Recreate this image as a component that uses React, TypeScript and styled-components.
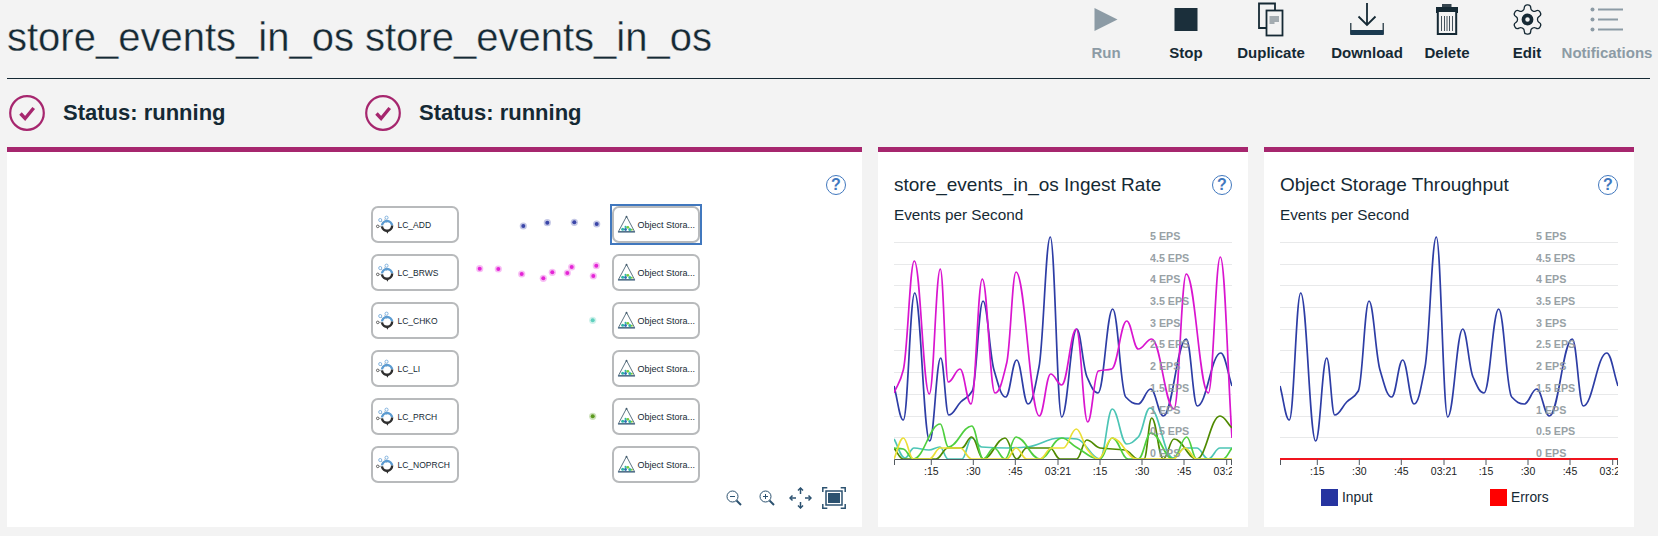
import React from 'react'
import styled, { createGlobalStyle } from 'styled-components'

type Pt = [number, number]

const Ink = '#152934'
const Magenta = '#a6266e'
const Link = '#4178be'

const GlobalStyle = createGlobalStyle`
  html, body {
    margin: 0;
    background: #f3f3f3;
    color: ${Ink};
    font-family: "Liberation Sans", Arial, sans-serif;
  }
  * { box-sizing: border-box; }
`

const Page = styled.div`
  width: 1658px;
  height: 536px;
  overflow: hidden;
  padding: 0 8px 0 7px;
`

const Header = styled.header`
  display: flex;
  justify-content: space-between;
  height: 79px;
  border-bottom: 1px solid ${Ink};
`

const Title = styled.h1`
  margin: 14px 0 0;
  font-size: 40px;
  line-height: 46px;
  font-weight: 400;
  -webkit-text-stroke: 0.35px #f3f3f3;
`

const Toolbar = styled.nav`
  display: flex;
  padding-top: 2px;
  padding-right: 3px;
`

const Tool = styled.div<{ $shift?: number; $off?: boolean }>`
  width: 80px;
  margin-left: ${p => p.$shift || 0}px;
  display: flex;
  flex-direction: column;
  align-items: center;
  color: ${p => (p.$off ? '#8c9ba5' : Ink)};
  font-size: 15px;
  font-weight: 700;
  white-space: nowrap;
  svg {
    display: block;
    height: 36px;
  }
  span {
    margin-top: 7px;
    line-height: 16px;
  }
`

const StatusRow = styled.div`
  display: flex;
  align-items: center;
  height: 68px;
  padding-left: 2px;
`

const Status = styled.div`
  width: 356px;
  display: flex;
  align-items: center;
  gap: 18px;
  font-size: 22px;
  font-weight: 700;
`

const Panels = styled.div`
  display: grid;
  grid-template-columns: 855px 370px 370px;
  gap: 16px;
  height: 380px;
`

const Panel = styled.section`
  background: #fff;
  border-top: 5px solid ${Magenta};
  padding: 23px 16px 0;
`

const PanelHead = styled.div<{ $end?: boolean }>`
  display: flex;
  justify-content: ${p => (p.$end ? 'flex-end' : 'space-between')};
  align-items: center;
  height: 20px;
`

const PanelTitle = styled.h2`
  margin: 0;
  font-size: 19px;
  font-weight: 400;
`

const SubTitle = styled.div`
  margin-top: 10px;
  font-size: 15.3px;
  line-height: 20px;
`

const Help = styled.span`
  width: 20px;
  height: 20px;
  border: 1.5px solid ${Link};
  border-radius: 50%;
  color: ${Link};
  font-size: 16px;
  font-weight: 700;
  line-height: 17px;
  text-align: center;
`

const Diagram = styled.div`
  position: relative;
  display: flex;
  gap: 153px;
  margin: 11px 0 0 348px;
  width: 329px;
`

const NodeColumn = styled.div`
  display: flex;
  flex-direction: column;
  gap: 11px;
`

const Node = styled.div<{ $selected?: boolean; $size: number }>`
  position: relative;
  width: 88px;
  height: 37px;
  display: flex;
  align-items: center;
  gap: 1px;
  padding-left: 1.5px;
  border: 2px solid #b8babc;
  border-radius: 7px;
  background: #fff;
  font-size: ${p => p.$size}px;
  white-space: nowrap;
  &::after {
    content: '';
    display: ${p => (p.$selected ? 'block' : 'none')};
    position: absolute;
    inset: -4px;
    border: 2px solid ${Link};
  }
`

const Dots = styled.svg`
  position: absolute;
  left: 0;
  top: 0;
  pointer-events: none;
`

const Controls = styled.div`
  display: flex;
  justify-content: flex-end;
  align-items: center;
  height: 22px;
  margin-top: 4px;
  color: #2c5270;
`

const Control = styled.svg<{ $gap?: number }>`
  display: block;
  margin-left: ${p => p.$gap || 0}px;
`

const ChartBox = styled.svg`
  display: block;
  margin-top: 5px;
  overflow: hidden;
`

const Legend = styled.div`
  display: flex;
  margin: 9px 0 0 41px;
  font-size: 13.8px;
`

const LegendItem = styled.div`
  flex: 0 0 169px;
  display: flex;
  align-items: center;
  gap: 4px;
`

const Swatch = styled.i<{ $color: string }>`
  width: 17px;
  height: 17px;
  background: ${p => p.$color};
  border: 1px solid ${p => p.$color}bb;
`

// monotone cubic through the traced points, long handles keep the peaks round
const smooth = (pts: Pt[]): string => {
  const n = pts.length
  const s: number[] = []
  for (let i = 0; i < n - 1; i++) s.push((pts[i + 1][1] - pts[i][1]) / (pts[i + 1][0] - pts[i][0]))
  const m = pts.map((_, i) => {
    if (i === 0) return s[0]
    if (i === n - 1) return s[n - 2]
    if (s[i - 1] * s[i] <= 0) return 0
    return (2 * s[i - 1] * s[i]) / (s[i - 1] + s[i])
  })
  let d = `M${pts[0][0]},${pts[0][1]}`
  for (let i = 0; i < n - 1; i++) {
    const h = (pts[i + 1][0] - pts[i][0]) * 0.4
    d += `C${pts[i][0] + h},${pts[i][1] + m[i] * h} ${pts[i + 1][0] - h},${pts[i + 1][1] - m[i + 1] * h} ${pts[i + 1][0]},${pts[i + 1][1]}`
  }
  return d
}

const blue: Pt[] = [
  [0, 386], [9.3, 420], [20.7, 293], [35.7, 441], [46.7, 358], [54.7, 415], [66.7, 402], [78.3, 391], [89, 301],
  [100, 370], [111.7, 397], [122.7, 360], [134, 404], [145, 367], [156.3, 237], [167.7, 417], [182.7, 329],
  [193, 377], [204, 393], [218.7, 309], [231.7, 397], [244.3, 404], [256.7, 389], [269.3, 416], [292.3, 339],
  [303.3, 406], [326.7, 353], [338, 386]
]

const pink: Pt[] = [
  [0, 393], [9.3, 370], [20.3, 261], [35.3, 394], [46.3, 269], [54.3, 382], [66, 369], [77, 404], [88.3, 279],
  [101, 393], [112.7, 363], [122, 272], [145.3, 416], [156.7, 374], [167.7, 385], [182.3, 329], [193.7, 422],
  [204.3, 371], [217.7, 369], [232.7, 321], [244.3, 349], [257.7, 339], [280, 409], [292.3, 274], [314.3, 393],
  [326.3, 257], [338, 438]
]

const teal: Pt[] = [
  [0, 439], [11, 458], [20, 448], [35, 450], [46, 447], [54, 459], [68, 459], [77.7, 438], [87.7, 447], [112.7, 448],
  [132.7, 447], [166, 438], [182.7, 439], [206, 459], [218.3, 409], [232.7, 444], [244.3, 437], [256, 408],
  [279, 458], [291, 448], [302.7, 448], [314.3, 459], [326, 448], [338, 448]
]

const olive: Pt[] = [
  [0, 448], [9.3, 459], [42, 459], [54, 448], [67.7, 448], [77.7, 437], [89.3, 459], [111, 438], [122.7, 459],
  [132.7, 448], [156, 448], [166, 459], [182.7, 459], [192.7, 440], [206, 448], [231, 450], [244.3, 459], [250, 459],
  [257.7, 418], [269.3, 459], [280, 439], [302.7, 459], [326, 416], [338, 428]
]

const green: Pt[] = [
  [0, 448], [9.3, 449], [19.3, 459], [46.3, 424], [54.3, 447], [77.7, 426], [89.3, 459], [100, 448], [111, 459],
  [122, 437], [146, 459], [167.7, 438], [182, 447], [206, 459], [218.3, 438], [234.3, 459], [244.3, 459],
  [257, 433], [279, 459], [292.7, 437], [302.7, 459], [329, 459], [338, 448]
]

const yellow: Pt[] = [
  [0, 459], [9.3, 438], [19.3, 459], [35.3, 459], [46.3, 448], [66, 448], [77.7, 459], [112.7, 459], [122, 448],
  [132.7, 459], [146, 459], [157.7, 448], [169.3, 448], [182.3, 429], [193.7, 450], [204.3, 459], [218.3, 438],
  [242.7, 459], [279, 459], [291, 448], [302.7, 459], [338, 459]
]

const ingestLines = [
  { pts: blue, color: '#2d3da5' },
  { pts: pink, color: '#d915cf' },
  { pts: teal, color: '#4cc5b5' },
  { pts: olive, color: '#4f8a00' },
  { pts: green, color: '#4fcf3f' },
  { pts: yellow, color: '#ebdf35' }
]

const scale = ['5', '4.5', '4', '3.5', '3', '2.5', '2', '1.5', '1', '0.5', '0']
const gridY = [242, 264, 285, 307, 329, 350, 372, 394, 416, 437, 459]
const ticks = [
  { x: 37.3, label: ':15' },
  { x: 79.3, label: ':30' },
  { x: 121.3, label: ':45' },
  { x: 164, label: '03:21' },
  { x: 206, label: ':15' },
  { x: 248, label: ':30' },
  { x: 290, label: ':45' },
  { x: 332.7, label: '03:21' }
]

const Chart = ({ lines, errors }: { lines: { pts: Pt[]; color: string }[]; errors?: boolean }) => (
  <ChartBox width={338} height={250} viewBox="0 230 338 250">
    {gridY.slice(0, 10).map(y => (
      <line key={y} x1={0} x2={338} y1={y + 0.5} y2={y + 0.5} stroke="#e8e9ea" />
    ))}
    {lines.map(l => (
      <path key={l.color} d={smooth(l.pts)} fill="none" stroke={l.color} strokeWidth={1.7} />
    ))}
    <path d="M0.5,465V459.5H337.5V465" fill="none" stroke="#50585e" />
    {errors && <line x1={0} x2={338} y1={459} y2={459} stroke="#f0141e" strokeWidth={2} />}
    {ticks.map(t => (
      <g key={t.x}>
        <line x1={t.x} x2={t.x} y1={459} y2={465} stroke="#50585e" />
        <text x={t.x} y={475} textAnchor="middle" fontSize={10.5} fill="#1c1c1c">
          {t.label}
        </text>
      </g>
    ))}
    {scale.map((v, i) => (
      <text key={v} x={256} y={gridY[i] - 2} fontSize={10.7} fontWeight={700} fill="#8d979c" opacity={0.9}>
        {v} EPS
      </text>
    ))}
  </ChartBox>
)

const CheckCircle = () => (
  <svg width={36} height={36} viewBox="0 0 36 36">
    <circle cx={18} cy={18} r={16.8} fill="none" stroke={Magenta} strokeWidth={2.2} />
    <path d="M11.5 18.5l4.6 5 8.6-10.5" fill="none" stroke={Magenta} strokeWidth={3.4} />
  </svg>
)

const LcIcon = () => (
  <svg width={22} height={22} viewBox="0 0 24 24">
    <path d="M4 13.5h4.5M6 7l4 4M10.5 5.5l2 4" stroke="#8a949a" strokeWidth={0.7} fill="none" />
    <circle cx={5.7} cy={6.6} r={1.7} fill="#fff" stroke="#6ea6d8" strokeWidth={0.9} />
    <circle cx={12.6} cy={4} r={1.7} fill="#fff" stroke="#6ea6d8" strokeWidth={0.9} />
    <circle cx={3} cy={13.5} r={1.4} fill="#fff" stroke="#333" strokeWidth={0.8} />
    <path d="M7.6 12.5a5.6 5.6 0 0 1 11.1 0" fill="none" stroke="#5b9bd1" strokeWidth={2.6} />
    <path d="M18.7 12.5a5.6 5.6 0 0 1-11.1 1.2" fill="none" stroke="#2f2f2f" strokeWidth={2.6} />
    <path d="M12 18.5l1.6 3 1.4-3z" fill="#2f2f2f" />
  </svg>
)

const StoreIcon = () => (
  <svg width={21} height={19} viewBox="0 0 22 20">
    <path d="M11 1.5L2.5 17.5h17z" fill="none" stroke="#40596b" strokeWidth={0.9} />
    <rect x={2} y={17} width={18} height={1.5} fill="#50708a" />
    <circle cx={11} cy={1.8} r={1} fill="#40596b" />
    <circle cx={7} cy={15} r={1.6} fill="#2db5a5" />
    <circle cx={10} cy={15.3} r={1.5} fill="#2f6fb5" />
    <circle cx={12.4} cy={13} r={1.5} fill="#7ccc3a" />
    <circle cx={14.5} cy={15.2} r={1.6} fill="#2db5a5" />
    <circle cx={10} cy={12.5} r={1.1} fill="#2db5a5" />
    <circle cx={16.6} cy={15.5} r={1} fill="#7ccc3a" />
  </svg>
)

const sources = ['LC_ADD', 'LC_BRWS', 'LC_CHKO', 'LC_LI', 'LC_PRCH', 'LC_NOPRCH']

// flowing events between the nodes
const dots = [
  ...[[523.3, 226], [547.3, 222.7], [574.3, 222.3], [596.7, 224]].map(p => ({ p, c: '#3b46a8' })),
  ...[
    [479.7, 268.7], [498.3, 269], [521.7, 274], [543.3, 278.3], [552.3, 272.3], [567.3, 273], [571.7, 267],
    [593.3, 276], [596.3, 265.7]
  ].map(p => ({ p, c: '#e426d6' })),
  { p: [592.7, 320.3], c: '#5fd0be' },
  { p: [592.7, 416.3], c: '#5c9a20' }
]

const ToolIcon = {
  run: (
    <svg width={30} viewBox="0 0 30 36">
      <path d="M3.5 6l23 11.5-23 11.5z" fill="#8c9ba5" />
    </svg>
  ),
  stop: (
    <svg width={30} viewBox="0 0 30 36">
      <rect x={3.5} y={6} width={23} height={23} fill="#1b2f3b" />
    </svg>
  ),
  duplicate: (
    <svg width={30} viewBox="0 0 30 36">
      <path d="M10 26H3V1.5h16V8" fill="none" stroke={Ink} strokeWidth={1.8} />
      <rect x={10.5} y={8.5} width={16} height={25} fill="#f3f3f3" stroke={Ink} strokeWidth={1.8} />
      <path d="M13.5 15h9.5M13.5 17h9.5M13.5 19h9.5M13.5 21h5" stroke="#55646e" strokeWidth={1} />
    </svg>
  ),
  download: (
    <svg width={34} viewBox="0 0 34 36">
      <path d="M17 1v22M8.5 14.5l8.5 8.5 8.5-8.5" fill="none" stroke={Ink} strokeWidth={1.8} />
      <path d="M.8 21v11h32.4V21" fill="none" stroke={Ink} strokeWidth={1.2} />
      <rect x={0.5} y={28} width={33} height={5} fill="#1b3a50" />
    </svg>
  ),
  remove: (
    <svg width={24} viewBox="0 0 24 36">
      <rect x={7} y={2} width={9.5} height={3} fill="#36454f" />
      <rect x={1} y={5} width={22} height={6} fill={Ink} />
      <rect x={2.8} y={9} width={18.4} height={23} fill="#f3f3f3" stroke={Ink} strokeWidth={2} />
      <path d="M6.5 14v15M9.5 14v15M12 14v15M14.5 14v15M17.5 14v15" stroke="#44525c" />
    </svg>
  ),
  edit: (
    <svg width={35} viewBox="0 0 24 24.7">
      <path
        d="M12.22 2h-.44a2 2 0 0 0-2 2v.18a2 2 0 0 1-1 1.73l-.43.25a2 2 0 0 1-2 0l-.15-.08a2 2 0 0 0-2.73.73l-.22.38a2 2 0 0 0 .73 2.73l.15.1a2 2 0 0 1 1 1.72v.51a2 2 0 0 1-1 1.74l-.15.09a2 2 0 0 0-.73 2.73l.22.38a2 2 0 0 0 2.73.73l.15-.08a2 2 0 0 1 2 0l.43.25a2 2 0 0 1 1 1.73V20a2 2 0 0 0 2 2h.44a2 2 0 0 0 2-2v-.18a2 2 0 0 1 1-1.73l.43-.25a2 2 0 0 1 2 0l.15.08a2 2 0 0 0 2.73-.73l.22-.39a2 2 0 0 0-.73-2.73l-.15-.08a2 2 0 0 1-1-1.74v-.5a2 2 0 0 1 1-1.74l.15-.09a2 2 0 0 0 .73-2.73l-.22-.38a2 2 0 0 0-2.73-.73l-.15.08a2 2 0 0 1-2 0l-.43-.25a2 2 0 0 1-1-1.73V4a2 2 0 0 0-2-2z"
        fill="none"
        stroke={Ink}
        strokeWidth={0.9}
      />
      <circle cx={12} cy={12} r={2.8} fill="none" stroke={Ink} strokeWidth={2.5} />
    </svg>
  ),
  notify: (
    <svg width={34} viewBox="0 0 34 36">
      <g fill="#8c9ba5">
        <circle cx={2.5} cy={7.5} r={2} />
        <circle cx={2.5} cy={17.5} r={2} />
        <circle cx={2.5} cy={27.5} r={2} />
        <rect x={8} y={6.5} width={25} height={2} />
        <rect x={8} y={16.5} width={20} height={2} />
        <rect x={8} y={26.5} width={25} height={2} />
      </g>
    </svg>
  )
}

const tools = [
  { label: 'Run', icon: ToolIcon.run, off: true },
  { label: 'Stop', icon: ToolIcon.stop },
  { label: 'Duplicate', icon: ToolIcon.duplicate, shift: 5 },
  { label: 'Download', icon: ToolIcon.download, shift: 16 },
  { label: 'Delete', icon: ToolIcon.remove },
  { label: 'Edit', icon: ToolIcon.edit },
  { label: 'Notifications', icon: ToolIcon.notify, off: true }
]

export default function App(): JSX.Element {
  return (
    <Page>
      <GlobalStyle />
      <Header>
        <Title>store_events_in_os store_events_in_os</Title>
        <Toolbar>
          {tools.map(t => (
            <Tool key={t.label} $shift={t.shift} $off={t.off}>
              {t.icon}
              <span>{t.label}</span>
            </Tool>
          ))}
        </Toolbar>
      </Header>
      <StatusRow>
        <Status>
          <CheckCircle />
          Status: running
        </Status>
        <Status>
          <CheckCircle />
          Status: running
        </Status>
      </StatusRow>
      <Panels>
        <Panel>
          <PanelHead $end>
            <Help>?</Help>
          </PanelHead>
          <Diagram>
            <NodeColumn>
              {sources.map(s => (
                <Node key={s} $size={8.5}>
                  <LcIcon />
                  {s}
                </Node>
              ))}
            </NodeColumn>
            <NodeColumn>
              {sources.map((s, i) => (
                <Node key={s} $size={9} $selected={i === 0}>
                  <StoreIcon />
                  Object Stora...
                </Node>
              ))}
            </NodeColumn>
            <Dots width={329} height={277} viewBox="371 206 329 277">
              {dots.map(d => (
                <g key={d.p.join()} fill={d.c}>
                  <circle cx={d.p[0]} cy={d.p[1]} r={3.6} opacity={0.3} />
                  <circle cx={d.p[0]} cy={d.p[1]} r={2} />
                </g>
              ))}
            </Dots>
          </Diagram>
          <Controls>
            <Control width={16} height={16} viewBox="0 0 16 16" fill="none" stroke="#2c5270">
              <circle cx={6.5} cy={6.5} r={5.5} />
              <path d="M4 6.5h5" />
              <path d="M10.5 10.5l4.5 4.5" strokeWidth={2} />
            </Control>
            <Control $gap={17} width={16} height={16} viewBox="0 0 16 16" fill="none" stroke="#2c5270">
              <circle cx={6.5} cy={6.5} r={5.5} />
              <path d="M4 6.5h5M6.5 4v5" />
              <path d="M10.5 10.5l4.5 4.5" strokeWidth={2} />
            </Control>
            <Control $gap={14} width={23} height={22} viewBox="0 0 23 22" fill="none" stroke="#2c5270" strokeWidth={1.5}>
              <path d="M11.5 1v6M11.5 15v6M1 11h6M16 11h6" />
              <path d="M9 3.5l2.5-2.5 2.5 2.5M9 18.5l2.5 2.5 2.5-2.5M3.5 8.5L1 11l2.5 2.5M19.5 8.5L22 11l-2.5 2.5" />
            </Control>
            <Control $gap={10} width={24} height={22} viewBox="0 0 24 22" fill="none" stroke="#2c5270" strokeWidth={1.5}>
              <path d="M.8 5V.8h4.5M18.7.8h4.5V5M.8 17v4.2h4.5M18.7 21.2h4.5V17" />
              <rect x={4} y={4} width={16} height={14} />
              <rect x={6} y={6} width={12} height={10} fill="#2c5270" stroke="none" />
            </Control>
          </Controls>
        </Panel>
        <Panel>
          <PanelHead>
            <PanelTitle>store_events_in_os Ingest Rate</PanelTitle>
            <Help>?</Help>
          </PanelHead>
          <SubTitle>Events per Second</SubTitle>
          <Chart lines={ingestLines} />
        </Panel>
        <Panel>
          <PanelHead>
            <PanelTitle>Object Storage Throughput</PanelTitle>
            <Help>?</Help>
          </PanelHead>
          <SubTitle>Events per Second</SubTitle>
          <Chart lines={[{ pts: blue, color: '#2d3da5' }]} errors />
          <Legend>
            <LegendItem>
              <Swatch $color="#2634a0" />
              Input
            </LegendItem>
            <LegendItem>
              <Swatch $color="#ff0000" />
              Errors
            </LegendItem>
          </Legend>
        </Panel>
      </Panels>
    </Page>
  )
}
